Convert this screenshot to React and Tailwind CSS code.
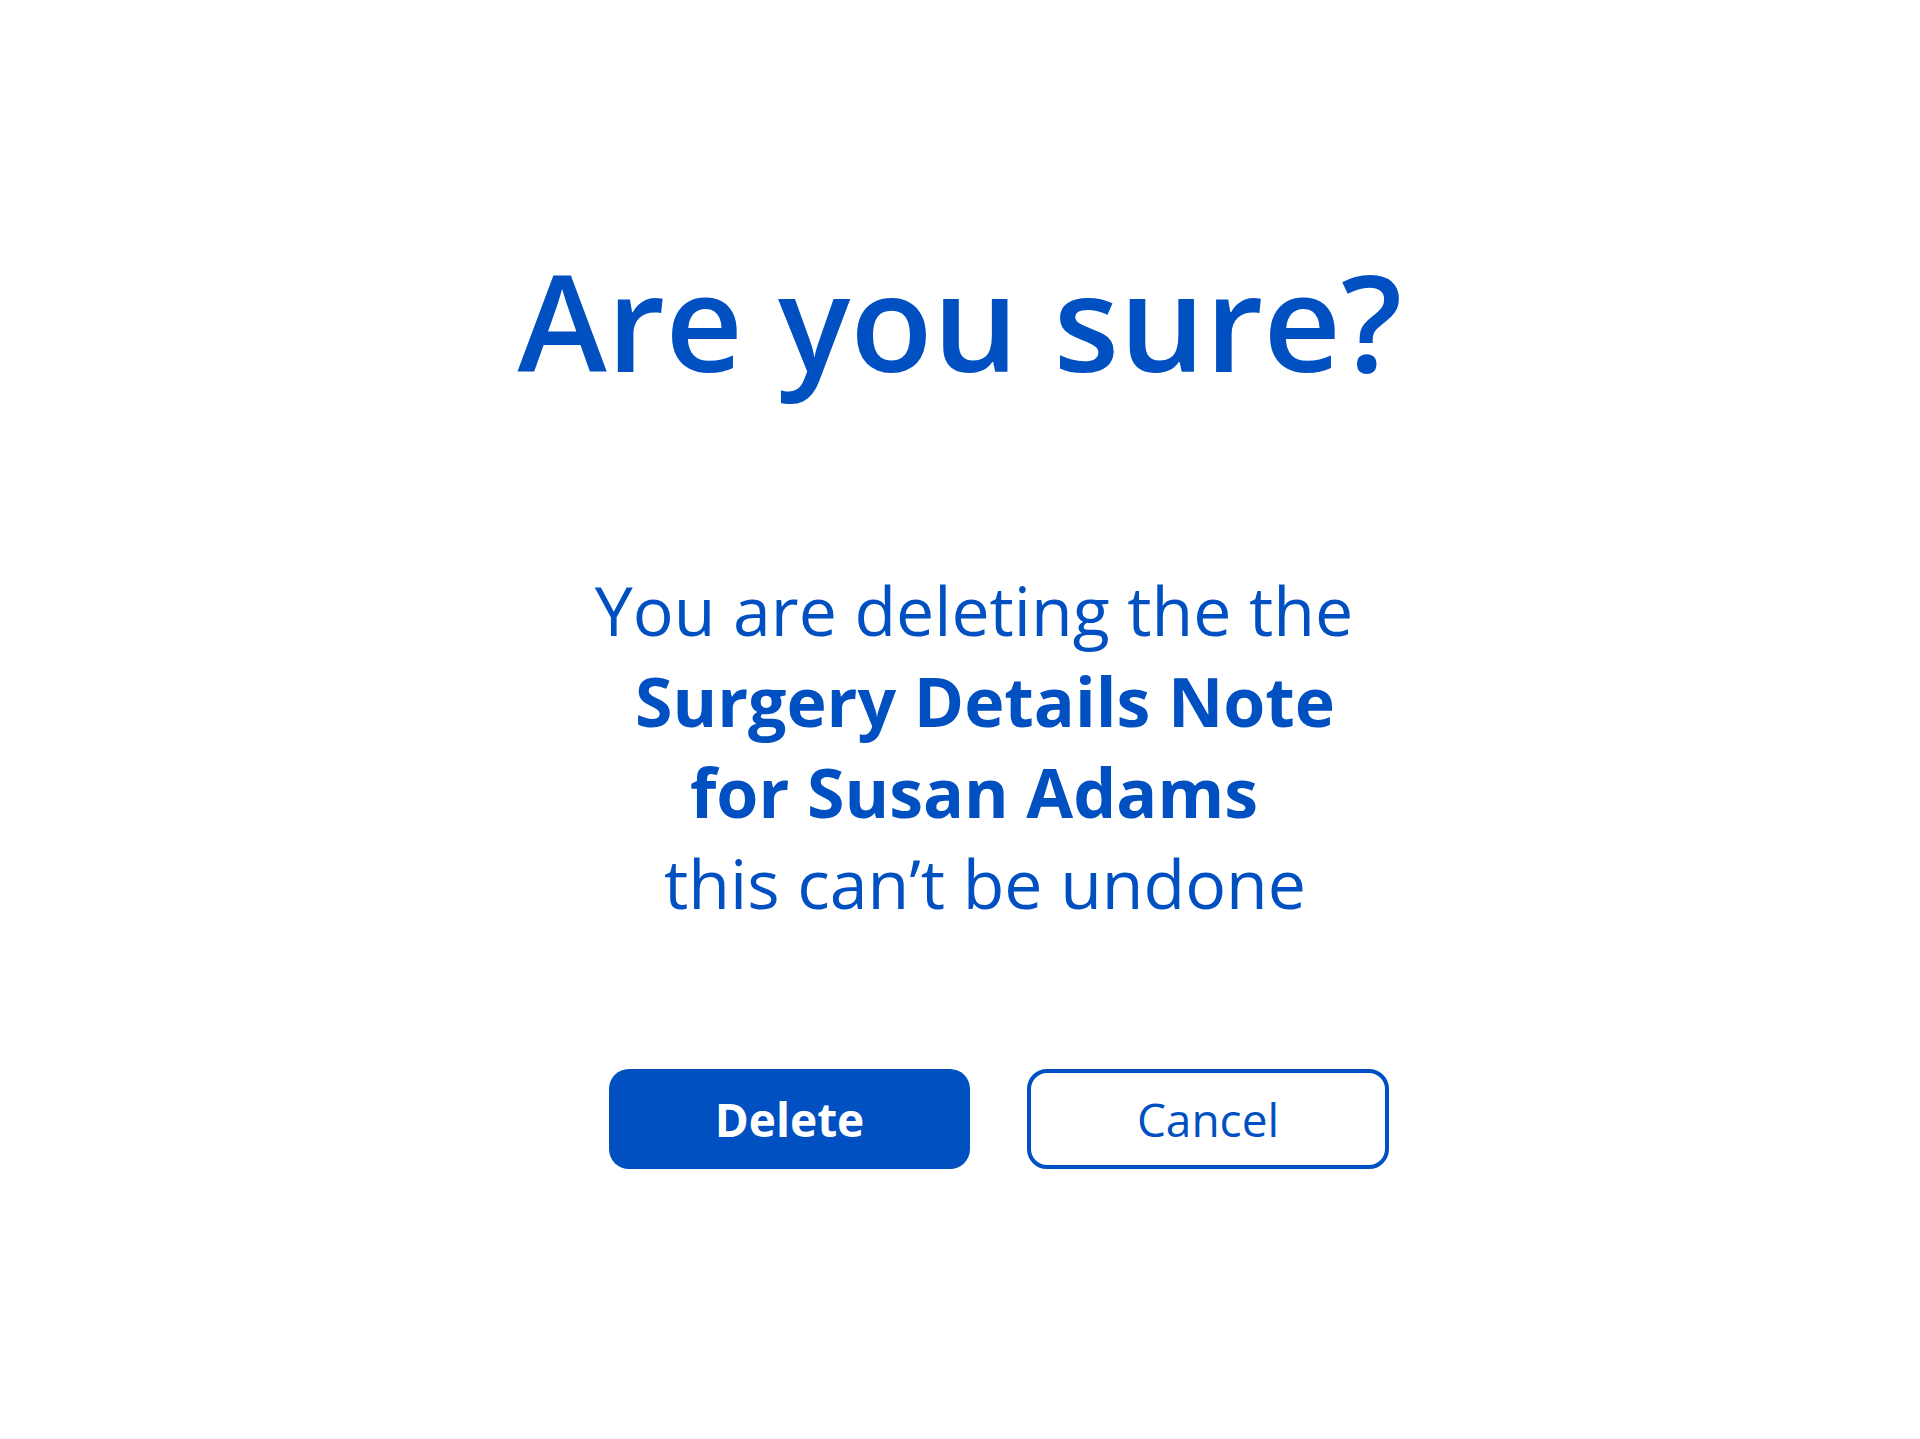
import React from "react";

const App = () => {
  return (
    <div className="w-[1920px] h-[1439px] bg-white flex flex-col items-center text-[#0050c2] font-['Open_Sans',sans-serif]">
      {/* Title */}
      <h1 className="mt-[253px] text-[135px] leading-[135px] font-semibold">
        Are you sure?
      </h1>

      {/* Message */}
      <div className="mt-[176px] text-center text-[68px] leading-[91px] ml-[28px]">
        <p>You are deleting the the</p>
        <p className="font-bold pl-[22px]">Surgery Details Note</p>
        <p className="font-bold">for Susan Adams</p>
        <p className="pl-[22px]">this can’t be undone</p>
      </div>

      {/* Actions */}
      <div className="mt-[141px] flex gap-[57px] ml-[78px]">
        <button className="w-[361px] h-[100px] rounded-[20px] bg-[#0050c2] text-white text-[46px] font-bold">
          Delete
        </button>
        <button className="w-[362px] h-[100px] rounded-[20px] border-4 border-[#0050c2] bg-white text-[#0050c2] text-[46px]">
          Cancel
        </button>
      </div>
    </div>
  );
};

export default App;
